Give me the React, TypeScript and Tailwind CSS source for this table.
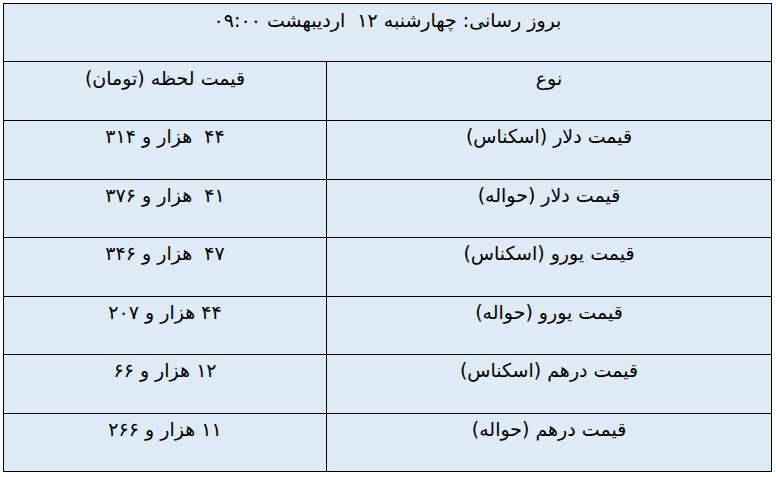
import React from "react";

const rows: { type: string; price: string; h: string }[] = [
  { type: "قیمت دلار (اسکناس)", price: "۴۴  هزار و ۳۱۴", h: "h-[58px]" },
  { type: "قیمت دلار (حواله)", price: "۴۱  هزار و ۳۷۶", h: "h-[57px]" },
  { type: "قیمت یورو (اسکناس)", price: "۴۷  هزار و ۳۴۶", h: "h-[58px]" },
  { type: "قیمت یورو (حواله)", price: "۴۴ هزار و ۲۰۷", h: "h-[57px]" },
  { type: "قیمت درهم (اسکناس)", price: "۱۲ هزار و ۶۶", h: "h-[58px]" },
  { type: "قیمت درهم (حواله)", price: "۱۱ هزار و ۲۶۶", h: "h-[57px]" },
];

export default function App() {
  return (
    <div className="w-[776px] h-[477px] bg-white pt-[3px] pl-[3px]">
      <div
        dir="rtl"
        className="w-[769px] bg-black p-px grid grid-cols-[444px_322px] gap-px text-[19px] leading-[26px] text-black"
        style={{ fontFamily: '"DejaVu Sans", sans-serif' }}
      >
        <div className="col-span-2 h-[57px] bg-[#deeaf6] text-center pt-[3px] whitespace-pre">
          بروز رسانی: چهارشنبه ۱۲  اردیبهشت ۰۹:۰۰
        </div>
        <div className="h-[58px] bg-[#deeaf6] text-center pt-[3px]">نوع</div>
        <div className="h-[58px] bg-[#deeaf6] text-center pt-[3px]">قیمت لحظه (تومان)</div>
        {rows.map((r, i) => (
          <React.Fragment key={i}>
            <div className={`${r.h} bg-[#deeaf6] text-center pt-[2px]`}>{r.type}</div>
            <div className={`${r.h} bg-[#deeaf6] text-center pt-[2px] whitespace-pre`}>{r.price}</div>
          </React.Fragment>
        ))}
      </div>
    </div>
  );
}
